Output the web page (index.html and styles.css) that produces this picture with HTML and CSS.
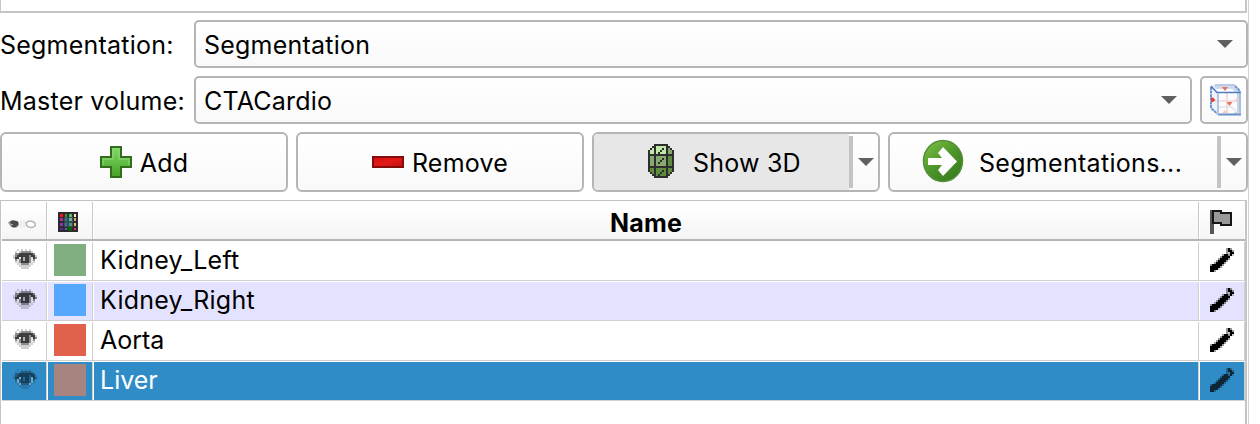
FILE: index.html
```html
<!DOCTYPE html>
<html lang="en">
<head>
<meta charset="utf-8">
<title>Segment Editor</title>
<link rel="stylesheet" href="styles.css">
</head>
<body>
<svg class="defs" width="0" height="0" aria-hidden="true">
  <symbol id="eye" viewBox="0 0 12 10">
    <g fill="none" stroke-width="1">
      <path stroke="#000" stroke-opacity=".18" d="M2 .5h1M4 .5h1M6 .5h1M8 .5h1M1 1.500h1M3 1.500h1M9 1.500h1M11 3.500h1M0 3.500h1M0 4.500h1M3 4.500h1M9 4.500h1M2 5.500h1M9 5.500h1M1 6.500h2M9 6.500h2M2 7.500h2M8 7.500h2M3 8.500h6M4 9.500h4"/>
      <path stroke="#000" stroke-opacity=".45" d="M4 1.500h5M1 2.500h2M10 2.500h1M1 3.500h1M8 3.500h1M8 4.500h1M11 4.500h1M1 5.500h1M3 5.500h1M8 5.500h1M10 5.500h1M3 6.500h1M8 6.500h1M4 7.500h4"/>
      <path stroke="#000" stroke-opacity=".76" d="M3 2.500h7M2 3.500h6M9 3.500h2M1 4.500h2M4 4.500h1M6 4.500h2M10 4.500h1M4 5.500h1M6 5.500h2M4 6.500h4"/>
      <path stroke="#000" stroke-opacity=".3" d="M5 4.500h1M5 5.500h1"/>
      <path stroke="#fff" stroke-opacity=".45" d="M3 4.500h1M9 4.500h1M2 5.500h1M9 5.500h1M2 6.500h1M9 6.500h1M3 7.500h1M8 7.500h1"/>
    </g>
  </symbol>
  <symbol id="pencil" viewBox="0 0 12 12">
    <path fill="none" stroke="#000" d="M9 .5h1M9 1.500h2M10 2.500h2M7 3.500h2M10 3.500h1M6 4.500h4M5 5.500h4M4 6.500h4M3 7.500h4M2 8.500h4M1 9.500h4M0 10.500h4M0 11.500h2M0 9.500h1M1 8.500h1"/>
    <path fill="none" stroke="#000" stroke-opacity=".4" d="M8 .5h1M10 .5h1M8 1.500h1M11 1.500h1M8 2.500h1M9 3.500h1M6 3.500h1M5 4.500h1M4 5.500h1M9 5.500h1M3 6.500h1M8 6.500h1M2 7.500h1M7 7.500h1M0 8.500h1M6 8.500h1M5 9.500h1M2 11.500h1"/>
    <path fill="none" stroke="#000" stroke-opacity=".2" d="M9 2.500h1M11 3.500h1M4 10.500h1"/>
  </symbol>
</svg>

<main class="panel">
  <div class="upper-frame"></div>

  <div class="field">
    <label class="label">Segmentation:</label>
    <div class="combo"><span>Segmentation</span><svg class="arrow" viewBox="0 0 16 8"><path d="M0 0h16L8 8z"/></svg></div>
  </div>

  <div class="field">
    <label class="label">Master volume:</label>
    <div class="combo"><span>CTACardio</span><svg class="arrow" viewBox="0 0 16 8"><path d="M0 0h16L8 8z"/></svg></div>
    <button class="geometry" aria-label="Geometry">
      <svg width="32" height="32" viewBox="0 0 32 32" fill="none">
        <path d="M3 1h22l5 7h-5l-3-3H6z" fill="#cfdaec"/>
        <path d="M2 3l6 6v21l-6-7z" fill="#eef2f9"/>
        <path d="M27 9h4v21H23l4-3z" fill="#c9d5ea"/>
        <path d="M1 17h27M17 9v20" stroke="#efdfe3" stroke-width="2"/>
        <path d="M9 23h12l9 7" stroke="#dfe3ea" stroke-width="1.500"/>
        <path d="M1 3v21l6.500 6M25 2l5 5v2" stroke="#6b94cd" stroke-width="2" stroke-dasharray="3 .6"/>
        <path d="M5 1h20" stroke="#b9cae4" stroke-width="2"/>
        <path d="M8 30.500h23" stroke="#6790c9" stroke-width="2"/>
        <path d="M30 9v21" stroke="#a9bfdf" stroke-width="2"/>
        <path d="M1 2l6 6.500h23" stroke="#4f7cbd" stroke-width="1.700"/>
        <path d="M8 9v21" stroke="#b3c5e1" stroke-width="2"/>
        <path d="M12 3h6l-3 4zM16.500 18h6l-3 4z" fill="#e8715f"/>
        <path d="M1 13.500h2l2.500 2.500L3 18H1z" fill="#dc4838"/>
        <path d="M12 29l3-3 3 3zM25 16l3-3v6z" fill="#f6c9c5"/>
      </svg>
    </button>
  </div>

  <div class="buttons">
    <button class="btn add">
      <svg width="32" height="32" viewBox="0 0 32 32"><defs><linearGradient id="gp" x2="0" y2="1"><stop stop-color="#82d968"/><stop offset="1" stop-color="#44a126"/></linearGradient></defs>
        <path d="M11 1h10v10h10v10H21v10H11V21H1V11h10z" fill="url(#gp)" stroke="#326d1b" stroke-width="2"/>
        <path d="M13 3h6v10h10v6M3 19v-6h10V3" fill="none" stroke="#91dc7c" stroke-width="1.500" opacity=".6"/></svg>
      <span>Add</span>
    </button>
    <button class="btn remove">
      <svg width="32" height="12" viewBox="0 0 32 12"><defs><linearGradient id="gr" x2="1" y2="1"><stop stop-color="#d60f0f"/><stop offset=".5" stop-color="#e11a18"/><stop offset="1" stop-color="#bd1010"/></linearGradient></defs>
        <path d="M1 1h30v10H1z" fill="url(#gr)" stroke="#850c0c" stroke-width="2"/></svg>
      <span>Remove</span>
    </button>
    <div class="btn split">
      <div class="main pressed">
        <svg class="mesh" width="26" height="34" viewBox="0 0 13 17" shape-rendering="crispEdges">
          <path fill="#c3e8ab" d="M3 1h6v4H1V3z"/><path fill="#88aa70" d="M9 1l3 2v2H9zM1 6h8v5H1z"/><path fill="#5e8c3c" d="M9 6h3v5H9zM1 12h11v2l-3 2H4l-3-2z"/>
          <path fill="none" stroke="#2e2e2e" d="M3 .5h7M2 1.500h2M9 1.500h2M1 2.500h1M11 2.500h1M.5 3v11M12.500 3v11M3.500 1v15M9.500 1v15M0 5.500h13M0 11.500h13M1 14.500h1M11 14.500h1M2 15.500h2M9 15.500h2M3 16.500h7M7 2.500h1M6 3.500h1M5 4.500h1M7 7.500h1M6 8.500h1M5 9.500h1M7 13.500h1M6 14.500h1M5 15.500h1"/>
        </svg>
        <span>Show 3D</span>
      </div>
      <div class="drop"><svg class="arrow" viewBox="0 0 16 8"><path d="M0 0h16L8 8z"/></svg></div>
    </div>
    <div class="btn split wide">
      <div class="main">
        <svg class="go" width="42" height="44" viewBox="0 0 42 44"><defs><linearGradient id="gg" x2=".8" y2="1"><stop stop-color="#83c448"/><stop offset=".5" stop-color="#4f982b"/><stop offset="1" stop-color="#397a1d"/></linearGradient></defs>
          <ellipse cx="21" cy="22" rx="19.500" ry="20.500" fill="url(#gg)" stroke="#538f39" stroke-width="1.500"/>
          <path d="M6 19h14l-4-5 5-6 14 14.500L21 37l-5-6 4-5H6z" fill="#fff"/></svg>
        <span class="wider">Segmentations...</span>
      </div>
      <div class="drop"><svg class="arrow" viewBox="0 0 16 8"><path d="M0 0h16L8 8z"/></svg></div>
    </div>
  </div>

  <div class="table">
    <div class="row head">
      <div class="cell">
        <svg class="eyes" width="28" height="10" viewBox="0 0 28 10"><path d="M0 3.500q5-5 11 0v3q-5 5-9 0z" fill="#999"/><path d="M2 2.500l3-1 5 1v3L8 8H4z" fill="#4a4a4a"/><path d="M3 5h2v1H3z" fill="#aaa"/><path d="M13 1v8M16 1v8" stroke="#ececec" stroke-width="2"/><path d="M18 4q4-4 9 0v3q-4 3-8 0z" fill="#fff" stroke="#b4b4b4" stroke-width="1.500"/></svg>
      </div>
      <div class="cell">
        <svg class="palette" width="20" height="20" viewBox="0 0 20 20"><path fill="#2e2a30" d="M0 0h20v20H0z"/><path fill="#31504f" d="M6 5h9v10H6z"/>
          <path fill="#fa1515" d="M2 2h3v3H2z"/><path fill="#4c9a43" d="M7 2h2v3H7z"/><path fill="#56c36b" d="M11 2h3v3h-3z"/><path fill="#f2f0ac" d="M16 2h2v3h-2z"/>
          <path fill="#9a36a8" d="M2 6h3v3H2z"/><path fill="#3c7775" d="M7 6h2v3H7z"/><path fill="#64b4ad" d="M11 6h3v3h-3z"/><path fill="#d5ae5d" d="M16 6h2v3h-2z"/>
          <path fill="#8038b7" d="M2 11h3v3H2z"/><path fill="#3973a3" d="M7 11h2v3H7z"/><path fill="#58918b" d="M11 11h3v3h-3z"/><path fill="#d4c06c" d="M16 11h2v3h-2z"/>
          <path fill="#5a2798" d="M2 16h3v2H2z"/><path fill="#4672b5" d="M7 16h2v2H7z"/><path fill="#08600b" d="M10 15h4v4h-4z"/><path fill="#d33c5b" d="M16 16h2v2h-2z"/></svg>
      </div>
      <div class="cell name"><span>Name</span></div>
      <div class="cell"><svg class="flag" width="22" height="24" viewBox="0 0 11 12" shape-rendering="crispEdges"><path fill="#999" d="M2 1h3l1 1h4v5H5V6H2z"/><path fill="#555" d="M0 0h2v12H0z"/><path fill="none" stroke="#161616" d="M1 .5h5M5 1.500h6M10.500 2v6M2 6.500h4M5 7.500h5M1.500 1v6"/></svg></div>
    </div>
    <div class="row">
      <div class="cell"><svg class="eye"><use href="#eye"/></svg></div><div class="cell"><i class="swatch green"></i></div><div class="cell name"><span>Kidney_Left</span></div><div class="cell"><svg class="pencil"><use href="#pencil"/></svg></div>
    </div>
    <div class="row alt">
      <div class="cell"><svg class="eye"><use href="#eye"/></svg></div><div class="cell"><i class="swatch blue"></i></div><div class="cell name"><span>Kidney_Right</span></div><div class="cell"><svg class="pencil"><use href="#pencil"/></svg></div>
    </div>
    <div class="row">
      <div class="cell"><svg class="eye"><use href="#eye"/></svg></div><div class="cell"><i class="swatch red"></i></div><div class="cell name"><span class="tight">Aorta</span></div><div class="cell"><svg class="pencil"><use href="#pencil"/></svg></div>
    </div>
    <div class="row selected">
      <div class="cell"><svg class="eye"><use href="#eye"/></svg></div><div class="cell"><i class="swatch brown"></i></div><div class="cell name"><span class="tight">Liver</span></div><div class="cell"><svg class="pencil"><use href="#pencil"/></svg></div>
    </div>
  </div>
</main>
</body>
</html>
```
FILE: styles.css
```css
* { box-sizing: border-box; }
body { margin: 0; background: #fff; font: 25px/30px Inter, "Liberation Sans", sans-serif; letter-spacing: .22px; color: #000; overflow: hidden; }
.defs { display: none; }
svg { display: block; flex: none; }
span, label { white-space: nowrap; }
button { font: inherit; letter-spacing: inherit; color: inherit; padding: 0; margin: 0; }
.panel { width: 1249px; height: 424px; border-right: 1px solid #d2d2d2; display: flex; flex-direction: column; }
.upper-frame { width: 1247px; height: 13px; border: 2px solid #c6c6c6; border-left-width: 1px; border-top: 0; flex: none; }
.field { display: flex; height: 48px; margin-top: 7px; flex: none; }
.field + .field { margin-top: 8px; }
.label { width: 194px; flex: none; padding-top: 10px; }
.combo { flex: 1; border: 2px solid #b5b5b5; border-radius: 5px; background: linear-gradient(#fff, #f9f9f9); display: flex; align-items: center; justify-content: space-between; padding: 2px 13px 0 8px; }
.arrow { width: 16px; height: 8px; fill: #606060; margin-top: -3px; }
.geometry { width: 48px; margin-left: 8px; border: 2px solid #b5b5b5; border-radius: 5px; background: linear-gradient(#fff, #f9f9f9); display: flex; align-items: center; justify-content: center; }
.geometry svg { margin: 0 0 0 3px; }
.buttons { display: grid; grid-template-columns: 288px 288px 288px 360px; gap: 8px; height: 60px; margin-top: 8px; flex: none; }
.btn { border: 2px solid #b5b5b5; border-radius: 6px; background: linear-gradient(#fff, #f9f9f9); display: flex; align-items: center; overflow: hidden; }
.btn.add, .btn.remove { justify-content: center; gap: 8px; }
.btn > span, .main span { padding-top: 2px; }
.main { width: 255px; height: 100%; display: flex; align-items: center; padding-left: 54px; }
.pressed { background: #e7e7e7; }
.mesh { margin: -2px 19px 0 0; }
.wide .main { width: 327px; padding-left: 32px; }
.go { margin: -3px 15px 0 0; }
.wider { letter-spacing: .3px; }
.tight { letter-spacing: 0; }
.drop { flex: 1; height: 52px; border-left: 4px solid #c4c4c4; display: flex; align-items: center; justify-content: center; }
.drop .arrow { margin: 0; }
.table { flex: 1; width: 1247px; margin-top: 8px; border: 1px solid #c4c4c4; border-right-width: 2px; border-bottom: 0; padding-left: 1px; padding-top: 1px; }
.row { display: grid; grid-template-columns: 44px 44px 1104px 44px; column-gap: 2px; width: 1243px; height: 40px; border-bottom: 1px solid #d0d0d0; padding-top: 1px; }
.cell { display: flex; align-items: center; justify-content: center; box-shadow: 1px 0 #d0d0d0; }
.head { height: 39px; border-bottom: 2px solid #b5b5b5; padding-top: 0; }
.head .cell { background: linear-gradient(#fff, #f5f5f5); box-shadow: 1px 0 #cacaca; }
.head .name { justify-content: center; padding: 4px 0 0; font-weight: 700; }
.head .cell:last-child { box-shadow: none; }
.eyes { margin: 6px 5px 0 0; }
.palette { margin: 2px 4px 0 0; }
.flag { margin: 3px 2px 0 0; }
.name { justify-content: flex-start; padding: 0 0 2px 6px; }
.alt .cell { background: #e3e3ff; }
.selected .cell { background: #308cc6; }
.selected .name { color: #fff; }
.eye { width: 24px; height: 20px; margin: -5px 0 0 1px; }
.pencil { width: 24px; height: 24px; margin-top: -3px; }
.selected .eye, .selected .pencil { opacity: .72; }
.swatch { width: 32px; height: 32px; margin-top: -3px; }
.green { background: #80ae80; }
.blue { background: #56a8ff; }
.red { background: #e0614c; }
.brown { background: #a88480; }
```
